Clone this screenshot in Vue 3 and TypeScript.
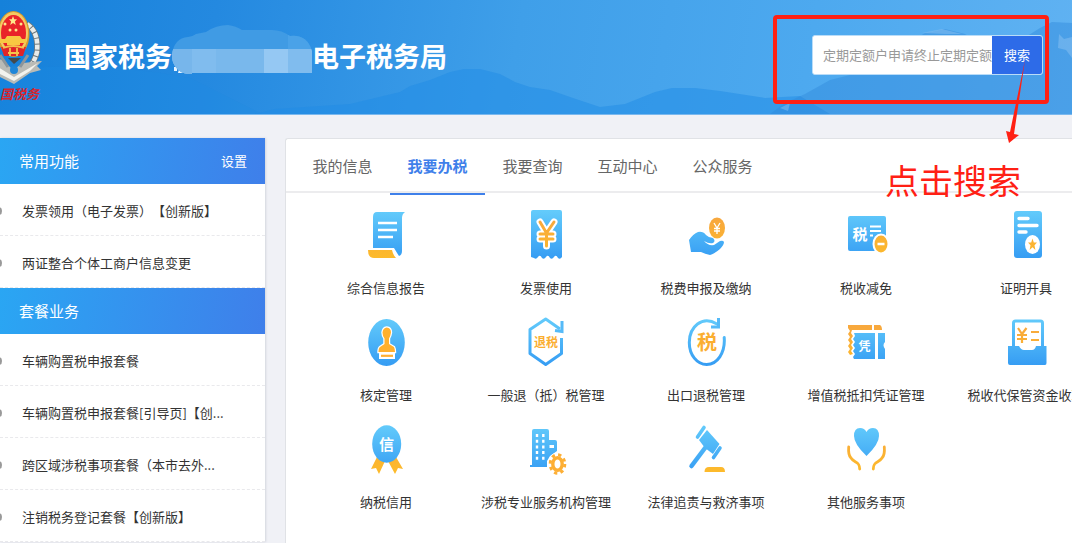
<script setup lang="ts">
import { ref } from 'vue'

interface Service {
  icon: string
  label: string
}

const keyword = ref('')
const activeTab = ref('我要办税')

const tabs: string[] = ['我的信息', '我要办税', '我要查询', '互动中心', '公众服务']

const common: string[] = ['发票领用（电子发票）【创新版】', '两证整合个体工商户信息变更']

const packages: string[] = [
  '车辆购置税申报套餐',
  '车辆购置税申报套餐[引导页]【创...',
  '跨区域涉税事项套餐（本市去外...',
  '注销税务登记套餐【创新版】',
]

const services: Service[] = [
  { icon: 'report', label: '综合信息报告' },
  { icon: 'invoice', label: '发票使用' },
  { icon: 'pay', label: '税费申报及缴纳' },
  { icon: 'relief', label: '税收减免' },
  { icon: 'certificate', label: '证明开具' },
  { icon: 'stamp', label: '核定管理' },
  { icon: 'refund', label: '一般退（抵）税管理' },
  { icon: 'export', label: '出口退税管理' },
  { icon: 'voucher', label: '增值税抵扣凭证管理' },
  { icon: 'deposit', label: '税收代保管资金收取' },
  { icon: 'credit', label: '纳税信用' },
  { icon: 'agency', label: '涉税专业服务机构管理' },
  { icon: 'law', label: '法律追责与救济事项' },
  { icon: 'other', label: '其他服务事项' },
]
</script>

<template>
  <div class="page">
    <svg class="defs" aria-hidden="true">
      <defs>
        <linearGradient id="blue" gradientUnits="userSpaceOnUse" x1="0" y1="2" x2="0" y2="50">
          <stop offset="0" stop-color="#63cbfb" />
          <stop offset="1" stop-color="#359cf3" />
        </linearGradient>
        <linearGradient id="gold" gradientUnits="userSpaceOnUse" x1="0" y1="4" x2="0" y2="50">
          <stop offset="0" stop-color="#f7a540" />
          <stop offset="1" stop-color="#fdbb2a" />
        </linearGradient>
      </defs>
    </svg>

    <header class="top">
      <svg class="hills" viewBox="0 0 1072 114" preserveAspectRatio="none" aria-hidden="true">
        <path d="M190 78Q230 98 262 114H0V70Q100 60 190 78Z" fill="#1c8ae2" opacity=".25" />
        <path d="M255 114L275 109L320 106L350 104L375 98L400 92L410 86L430 80L450 72L464 69L480 69L500 74L515 82L530 87L550 90L570 97L600 107L625 104L655 92L672 88L695 88L720 91L765 98L800 96L830 114Z" fill="#1f8be6" opacity=".5" />
        <path d="M770 114L785 103L805 94L830 80L850 75L880 70L905 45L925 33L945 29L965 34L985 48L1005 50L1040 28L1052 22L1072 23V114Z" fill="#3089dc" opacity=".45" />
        <path d="M1059 34L1064 39L1072 37V58L1066 50L1058 48ZM922 33L942 29L962 34L946 34ZM780 108L790 103L788 111Z" fill="#9bcbf5" opacity=".4" />
      </svg>

      <div class="brand">
        <svg class="emblem" viewBox="0 0 44 96" role="img" aria-label="国税务">
          <path d="M27 14Q39 22 37 42Q34 55 24 61" fill="none" stroke="#6d777b" stroke-width="6" />
          <path d="M27 14Q39 22 37 42Q34 55 24 61" fill="none" stroke="#e9ecea" stroke-width="4.500" stroke-dasharray="5 1" />
          <path d="M-4 48L3 50L13 60L23 53L42 51L37 56L41 60L30 63L14 74L-4 65Z" fill="#b9bbb6" />
          <path d="M-2 57L14 67L38 53L30 61L14 71L-2 63Z" fill="#f3f3ee" />
          <path d="M0 45L8 57M28 45L20 57" stroke="#8d969a" stroke-width="3" />
          <circle cx="14" cy="60" r="4" fill="#1e86d8" />
          <path d="M8 48L14 54L21 48Z" fill="#43494c" />
          <ellipse cx="13.500" cy="24" rx="16" ry="23" fill="#d79b2d" />
          <ellipse cx="13.500" cy="23" rx="14.500" ry="21" fill="#f4ca63" />
          <ellipse cx="13.500" cy="23" rx="12.500" ry="18" fill="#e92329" />
          <path d="M13 6L14.200 9.300L17 9.300L14.900 11.500L15.800 15L13 13L10.200 15L11.100 11.500L9 9.300L11.800 9.300Z" fill="#ffe68a" />
          <g fill="#ffe68a">
            <circle cx="5" cy="14" r="1.500" />
            <circle cx="21" cy="14" r="1.500" />
            <circle cx="10" cy="20" r="1.500" />
            <circle cx="16" cy="20" r="1.500" />
          </g>
          <path d="M7 26H20L22 29H26V33H20V35H7V33H0V29H5Z" fill="#f8c842" />
          <path d="M1 37H26L23 46H4Z" fill="#df2428" />
          <path d="M3 38Q13 34 24 38M8 43H19M10 38V46M17 38V46" fill="none" stroke="#f5c34b" stroke-width="1.800" />
          <text x="0" y="89" class="script">国税务</text>
        </svg>
        <h1 class="title">
          <span>国家税务</span>
          <svg class="mosaic" viewBox="0 0 140 52" aria-hidden="true">
            <clipPath id="cloud">
              <path d="M20 50A18 18 0 0 1 0 31Q2 14 16 13Q20 13 24 10L34 8Q44 1 56 1Q64 2 70 6H100Q110 6 118 12Q135 10 140 27V49H20Z" />
            </clipPath>
            <path d="M2 43h3v4h-3zM7 45h5l2 4h-8z" fill="#e9f5ff" />
            <g clip-path="url(#cloud)">
              <path d="M0 0H140V52H0Z" fill="#409be4" />
              <path d="M116 0H140V52H116Z" fill="#4aa2e8" />
              <path d="M0 25H140V52H0Z" fill="#80bcee" />
              <path d="M0 25H20V52H0Z" fill="#77b6eb" />
              <path d="M44 25H92V52H44Z" fill="#79b8ec" />
              <path d="M92 25H116V52H92Z" fill="#95c8f3" />
            </g>
          </svg>
          <span>电子税务局</span>
        </h1>
      </div>

      <form class="search" @submit.prevent>
        <input v-model="keyword" class="field" type="text" aria-label="搜索内容" placeholder="定期定额户申请终止定期定额" />
        <button class="go" type="submit">搜索</button>
        <div class="frame"></div>
        <svg class="arrow" viewBox="0 0 30 84" aria-hidden="true">
          <path d="M23 0L12 74L17 75L7 83L4 71L8 72Z" fill="#ff2014" />
        </svg>
        <span class="hint">点击搜索</span>
      </form>
    </header>

    <div class="body">
      <aside class="side">
        <section>
          <div class="side-head">
            <h2>常用功能</h2>
            <a href="#">设置</a>
          </div>
          <ul>
            <li v-for="item in common" :key="item"><a href="#">{{ item }}</a></li>
          </ul>
        </section>
        <section>
          <div class="side-head">
            <h2>套餐业务</h2>
          </div>
          <ul>
            <li v-for="item in packages" :key="item"><a href="#">{{ item }}</a></li>
          </ul>
        </section>
      </aside>

      <main class="panel">
        <nav class="tabs">
          <button
            v-for="tab in tabs"
            :key="tab"
            type="button"
            :class="['tab', { active: tab === activeTab }]"
            @click="activeTab = tab"
          >{{ tab }}</button>
        </nav>

        <div class="grid">
          <a v-for="s in services" :key="s.icon" class="cell" href="#">
            <svg class="icon" viewBox="0 0 48 52" aria-hidden="true">
              <g v-if="s.icon === 'report'">
                <path d="M15 3H43Q40 5 40 9V42Q40 46 37 47Q35 44 32 39H11V8Q11 3 15 3Z" fill="url(#blue)" />
                <path d="M6 41H30Q31 46 34 49H12Q6 49 6 41Z" fill="url(#gold)" />
                <path d="M16 14H35M16 21H35M16 28H31" stroke="#fff" stroke-width="2.400" />
              </g>
              <g v-else-if="s.icon === 'invoice'">
                <path d="M11 1H38Q40 1 40 3V48Q38 51 36 49Q34 45 32 48Q30 51 28 49Q26 45 24 48Q22 51 20 49Q18 45 16 48Q14 51 12 49L9 48V3Q9 1 11 1Z" fill="url(#blue)" />
                <path d="M18 13L24.500 24L32 13M24.500 24V37M18 25H31M18 30H31" fill="none" stroke="#fff" stroke-width="7" stroke-linecap="round" stroke-linejoin="round" />
                <path d="M18 13L24.500 24L32 13M24.500 24V37M18 25H31M18 30H31" fill="none" stroke="url(#gold)" stroke-width="3" stroke-linecap="round" />
              </g>
              <g v-else-if="s.icon === 'pay'">
                <path d="M7 31Q11 25 16 23Q21 22 24 26Q27 29 31 29Q34 32 31 34Q27 35 22 32Q26 37 32 36L38 32Q41 31 42 33Q42 36 38 40Q32 45 28 46Q23 45 19 43H9Z" fill="url(#blue)" />
                <ellipse cx="35" cy="19" rx="8" ry="10.500" fill="url(#gold)" />
                <path d="M32 14L35 19L38 14M35 19V25M32 19.500H38M32 22H38" fill="none" stroke="#fff" stroke-width="1.300" />
              </g>
              <g v-else-if="s.icon === 'relief'">
                <rect x="6" y="7" width="38" height="35" rx="2" fill="url(#blue)" />
                <text x="18" y="31" class="glyph bold" font-size="15" fill="#fff">税</text>
                <path d="M28 17.500H39M28 22H39M28 26.500H31" stroke="#fff" stroke-width="2" />
                <ellipse cx="39" cy="35" rx="8.500" ry="10.500" fill="#fff" />
                <ellipse cx="39" cy="35" rx="6.500" ry="8.500" fill="url(#gold)" />
                <path d="M35.500 35H42.500" stroke="#fff" stroke-width="2.400" />
              </g>
              <g v-else-if="s.icon === 'certificate'">
                <rect x="12" y="2" width="28" height="47" rx="3" fill="url(#blue)" />
                <path d="M17 9.500H26M17 16.500H35M17 23H24" stroke="#fff" stroke-width="3.400" stroke-linecap="round" />
                <ellipse cx="30.500" cy="35.500" rx="7.500" ry="9.500" fill="#fff" />
                <path d="M30.500 29.500L31.800 33.600H35L32.500 36.300L33.400 41L30.500 38.300L27.600 41L28.500 36.300L26 33.600H29.200Z" fill="url(#gold)" />
              </g>
              <g v-else-if="s.icon === 'stamp'">
                <ellipse cx="24.500" cy="26.500" rx="18.300" ry="23.500" fill="url(#blue)" />
                <path d="M24.700 11.500Q29 12 29 16.500Q28.500 20 27 22.500V28L32 31Q33 33 33 36H16.500Q16.500 32 18 31L22.500 28V22.500Q20.500 20 20.500 16.500Q21 12 24.700 11.500Z" fill="#ffb02e" stroke="#fff" stroke-width="2.400" paint-order="stroke" />
                <path d="M17 37H33V43H17Z" fill="#fff" />
                <path d="M19 39.800H31" stroke="#ffaf35" stroke-width="2.200" />
              </g>
              <g v-else-if="s.icon === 'refund'">
                <path d="M39.500 22V37.500L23.700 48.500L8 37.500V13.500L23.700 3L38 13" fill="none" stroke="url(#blue)" stroke-width="3" stroke-linejoin="round" />
                <path d="M40 5V15.500L33 14.500" fill="none" stroke="#55baf8" stroke-width="3" />
                <text x="24" y="30.500" class="glyph bold" font-size="12" fill="#fbae30">退税</text>
              </g>
              <g v-else-if="s.icon === 'export'">
                <path d="M42.200 21.500C43.500 37 35 48.500 24.700 48.500C15 48.500 7.300 39 7.300 26.500C7.300 11 20 -1 35 8" fill="none" stroke="url(#blue)" stroke-width="3" stroke-linecap="round" />
                <path d="M36.500 2V11H29" fill="none" stroke="#55baf8" stroke-width="3" />
                <text x="25" y="34" class="glyph bold" font-size="20" fill="#fbae30">税</text>
              </g>
              <g v-else-if="s.icon === 'voucher'">
                <path d="M6 9H30V14H10L9 17L11 20L9 23L11 26L9 29L11 32L9 35L11 38L8 39L6 36L8 33L6 30L8 27L6 24L8 21L6 18L8 15L6 12ZM32 9H38Q40 10 40 14H32Z" fill="url(#gold)" />
                <path d="M12 17H33V43H12L11 41L13 38L11 35L13 32L11 29L13 26L11 23L13 20ZM36 17H43V26Q40 29 43 33V43H36Z" fill="url(#blue)" />
                <text x="22.500" y="34.500" class="glyph bold" font-size="12" fill="#fff">凭</text>
              </g>
              <g v-else-if="s.icon === 'deposit'">
                <path d="M11.500 32V7Q11.500 5 13.500 5H38.500Q40.500 5 40.500 7V32" fill="none" stroke="url(#blue)" stroke-width="3" />
                <path d="M6 30H17Q19 34 22 34H30Q33 34 34 30H44.500V47Q44.500 49 43 49H8Q6 49 6 47Z" fill="url(#blue)" />
                <path d="M16 12L20 18L24.500 12M20 18V27M15 19H25M15 23H25M29 16H37M29 24H37" fill="none" stroke="url(#gold)" stroke-width="2.200" />
              </g>
              <g v-else-if="s.icon === 'credit'">
                <path d="M15 34L9 46L14 45L17 51L23 38ZM34 34L41 46L36 45L33 51L26 38Z" fill="url(#gold)" />
                <ellipse cx="24.700" cy="21" rx="14.500" ry="18.700" fill="url(#blue)" />
                <text x="24.500" y="26.500" class="glyph bold" font-size="15" fill="#fff">信</text>
              </g>
              <g v-else-if="s.icon === 'agency'">
                <path d="M12 6H25Q27 6 27 8V17H33Q35 17 35 19V28L28 33L25 38V44H8V42H10V8Q10 6 12 6Z" fill="url(#blue)" />
                <path d="M15 11V39M21.300 11V39" stroke="#fff" stroke-width="2.400" stroke-dasharray="3 2.700" />
                <path d="M27.500 22H32V25H27.500Z" fill="#fff" />
                <ellipse cx="35.500" cy="41" rx="7" ry="9" fill="#fff" stroke="#fff" stroke-width="5" />
                <ellipse cx="35.500" cy="41" rx="7.300" ry="9.300" fill="none" stroke="#fdaf35" stroke-width="3" stroke-dasharray="3.300 3.300" />
                <ellipse cx="35.500" cy="41" rx="4.700" ry="6.300" fill="#fff" stroke="#fdaf35" stroke-width="3.400" />
              </g>
              <g v-else-if="s.icon === 'law'">
                <path d="M25 7L37.500 21L31 31L23 25L17 17Z" fill="url(#blue)" />
                <path d="M22 4.500L15.500 14M38 25L31.500 34.500" stroke="url(#blue)" stroke-width="3.600" stroke-linecap="round" />
                <path d="M23 25L9.500 43" stroke="url(#blue)" stroke-width="4.500" stroke-linecap="round" />
                <path d="M22.500 49Q22.500 44 27 44H39Q43 44 43 49Z" fill="url(#gold)" />
              </g>
              <g v-else>
                <path d="M24.500 33Q12 21 12 13Q12 5 18 5Q22.500 5 24.500 9Q26.500 5 31 5Q37 5 37 13Q37 21 24.500 33Z" fill="url(#blue)" />
                <path d="M6.700 24Q6 32 9 35C12 40 17.700 38 17.700 46M42.300 24Q43 32 40 35C37 40 31.300 38 31.300 46" fill="none" stroke="url(#gold)" stroke-width="2.800" stroke-linecap="round" />
              </g>
            </svg>
            <span class="label">{{ s.label }}</span>
          </a>
        </div>
      </main>
    </div>
  </div>
</template>

<style>
html,
body {
  margin: 0;
  background: #f0f1f6;
  overflow: hidden;
}
</style>

<style scoped>
.page {
  font-family: "Noto Sans CJK SC", "Liberation Sans", sans-serif;
  font-size: 13px;
  line-height: 20px;
  color: #333;
  text-spacing-trim: space-all;
}
.defs {
  position: absolute;
  width: 0;
  height: 0;
}
a {
  color: inherit;
  text-decoration: none;
}
button,
input {
  font: inherit;
  border: 0;
  margin: 0;
}
.top {
  position: relative;
  display: flex;
  justify-content: space-between;
  box-sizing: border-box;
  height: 115px;
  padding-right: 29px;
  border-bottom: 1px solid #7ab8ee;
  background: linear-gradient(100deg, #1581da 0%, #2489e0 20%, #3f9fe9 48%, #4da9ef 75%, #60b2f2 100%);
}
.hills {
  position: absolute;
  inset: 0;
  width: 100%;
  height: 100%;
}
.brand {
  position: relative;
  display: flex;
  align-items: flex-start;
  gap: 20px;
}
.emblem {
  width: 44px;
  height: 96px;
  margin-top: 10px;
}
.script {
  font-size: 13px;
  font-weight: 700;
  font-style: italic;
  fill: #d8232c;
}
.title {
  display: flex;
  align-items: center;
  margin: 36px 0 0;
  font-size: 27px;
  line-height: 40px;
  font-weight: 700;
  color: #fff;
  white-space: nowrap;
}
.mosaic {
  width: 140px;
  height: 52px;
  margin: -14px 0 -2px;
}
.search {
  position: relative;
  display: flex;
  flex: none;
  box-sizing: border-box;
  width: 231px;
  height: 40px;
  margin-top: 35px;
  border: 1px solid #b9dcf8;
  border-radius: 3px;
  background: #fff;
}
.field {
  flex: 1;
  min-width: 0;
  padding: 0 0 0 10px;
  border-radius: 3px 0 0 3px;
  background: #fff;
  color: #333;
  outline: 0;
}
.field::placeholder {
  color: #999;
  opacity: 1;
}
.go {
  width: 50px;
  padding: 0;
  background: #2d6be8;
  color: #fff;
  border-radius: 0 2px 2px 0;
}
.frame {
  position: absolute;
  inset: -21px -7px -30px -40px;
  border: 4px solid #ff2014;
  border-radius: 4px;
  pointer-events: none;
}
.arrow {
  position: absolute;
  top: 24px;
  right: 10px;
  width: 30px;
  height: 84px;
  z-index: 2;
  pointer-events: none;
}
.hint {
  position: absolute;
  top: 119px;
  right: 21px;
  z-index: 2;
  font-size: 34px;
  line-height: 50px;
  color: #ff2014;
  white-space: nowrap;
  pointer-events: none;
}
.body {
  display: flex;
  align-items: flex-start;
  gap: 20px;
  padding-top: 23px;
}
.side {
  flex: none;
  width: 265px;
  background: #fff;
  box-shadow: 1px 0 2px #d4d7de;
}
.side-head {
  display: flex;
  align-items: center;
  justify-content: space-between;
  box-sizing: border-box;
  height: 46px;
  padding: 0 18px 0 19px;
  background: linear-gradient(100deg, #2aa6f3, #3f7fea);
  color: #fff;
}
.side-head h2 {
  margin: 0;
  font-size: 15px;
  font-weight: 400;
}
.side ul {
  margin: 0;
  padding: 0;
  list-style: none;
}
.side li {
  display: flex;
  align-items: center;
  gap: 20px;
  box-sizing: border-box;
  height: 52px;
  border-bottom: 1px dashed #e9e9ec;
  padding-top: 2px;
  white-space: nowrap;
}
.side li::before {
  content: "";
  width: 6px;
  height: 8px;
  margin-left: -4px;
  border-radius: 50%;
  background: #999;
}
.panel {
  flex: 1;
  min-width: 0;
  min-height: 420px;
  border: 1px solid #e0e2e6;
  border-right: 0;
  border-radius: 3px 0 0 0;
  background: #fff;
  overflow: hidden;
}
.tabs {
  display: flex;
  height: 52px;
  padding-left: 9px;
  border-bottom: 2px solid #ececee;
}
.tab {
  flex: none;
  width: 95px;
  height: 56px;
  padding: 0;
  border-bottom: 2px solid transparent;
  background: none;
  font-size: 15px;
  color: #666;
  cursor: pointer;
}
.tab.active {
  border-bottom-color: #3f80ea;
  color: #3f80ea;
  font-weight: 700;
}
.grid {
  display: grid;
  grid-template-columns: repeat(5, 160px);
  row-gap: 18px;
  padding: 16px 0 0 20px;
}
.cell {
  display: flex;
  flex-direction: column;
  align-items: center;
  gap: 17px;
}
.icon {
  width: 48px;
  height: 52px;
}
.label {
  white-space: nowrap;
}
.glyph {
  text-anchor: middle;
}
.bold {
  font-weight: 700;
}
</style>
